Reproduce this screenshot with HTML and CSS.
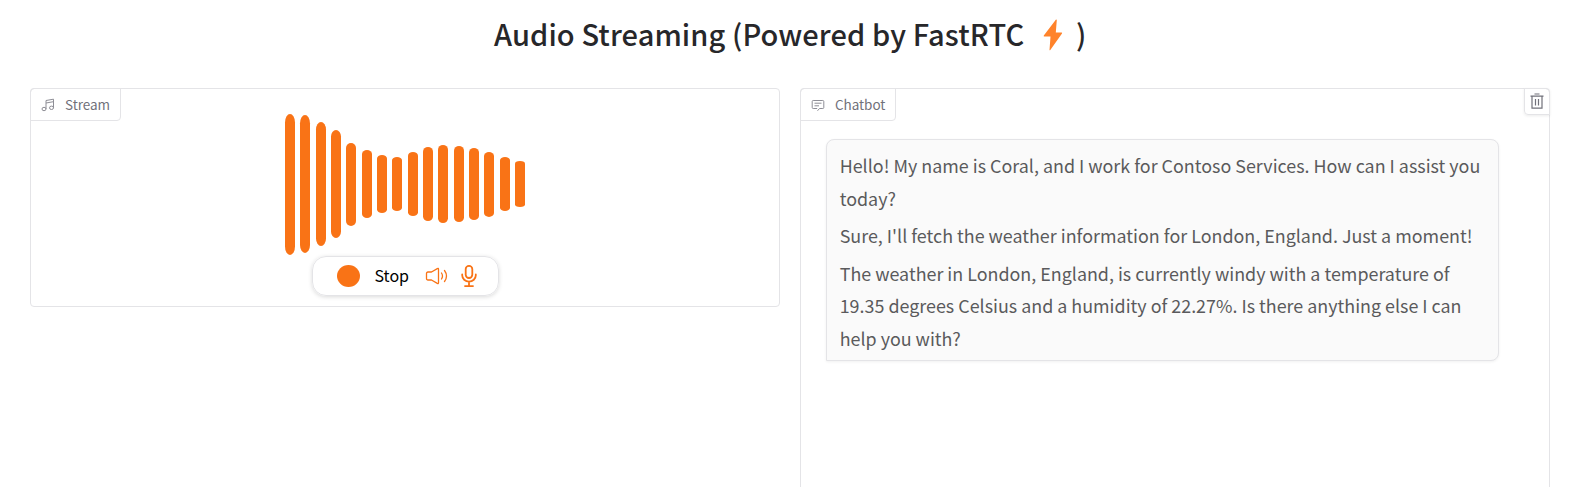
FILE: index.html
```html
<!DOCTYPE html>
<html lang="en">
<head>
<meta charset="utf-8">
<title>Audio Streaming</title>
<link rel="stylesheet" href="styles.css">
</head>
<body>
<h1 class="title"><span class="title-text">Audio Streaming (Powered by FastRTC</span><svg class="bolt" viewBox="0 0 20 32"><path d="M13 .5.800 16.500q-.6 1 .6 1H7.500L6.500 31q.3.400.8 0L19 14.500q.5-1-.5-1H12.800L13.800 1q-.2-.8-.8-.5z" fill="#ff832b"/></svg><span>)</span></h1>
<main class="columns">
  <section class="panel stream">
    <div class="label"><svg class="label-icon" viewBox="0 0 14 14" fill="none" stroke="#8e8e96" stroke-width="1"><ellipse cx="3" cy="11" rx="2" ry="1.700"/><ellipse cx="10.500" cy="9.800" rx="2" ry="1.700"/><path d="M5 11V2.500l7.500-1.300v8.600M5 5l7.500-1.300"/></svg><span class="label-text">Stream</span></div>
    <div class="wave">
      <i style="height:141px"></i><i style="height:138px"></i><i style="height:124px"></i><i style="height:108px"></i><i style="height:83px"></i><i style="height:68px"></i><i style="height:58px"></i><i style="height:54px"></i><i style="height:64px"></i><i style="height:74px"></i><i style="height:78px"></i><i style="height:76px"></i><i style="height:72px"></i><i style="height:65px"></i><i style="height:54px"></i><i style="height:46px"></i>
    </div>
    <div class="controls">
      <span class="dot"></span><span class="stop">Stop</span>
      <svg class="speaker" viewBox="0 0 24 20" fill="none" stroke="#f97316" stroke-width="1.300" stroke-linecap="round" stroke-linejoin="round"><path d="M13.500 3.200v13.600q0 1.200-1.200.6L6.500 14H3q-1.500 0-1.500-1.500v-5Q1.500 6 3 6h3.500l5.800-3.400q1.200-.6 1.200.6zM16.500 7q2 3 0 6M19.500 4.500q4 5.500 0 11"/></svg>
      <svg class="mic" viewBox="0 0 16 24" fill="none" stroke="#f97316" stroke-width="1.800" stroke-linecap="round"><rect x="4.700" y="1.800" width="6.600" height="12.200" rx="3.300"/><path d="M1.200 10.500v.8a6.800 6.300 0 0 0 13.600 0v-.8M8 18v4M4 22.100h8"/></svg>
    </div>
  </section>
  <section class="panel chat">
    <div class="label"><svg class="label-icon" viewBox="0 0 14 14" fill="none" stroke="#8e8e96" stroke-width="1"><path d="M6.500 12.800 8.500 10.500h3.300q1 0 1-1v-6q0-1-1-1H2.200q-1 0-1 1v6q0 1 1 1h4M3.500 5.200h7M3.500 7.800h4.500"/></svg><span class="label-text">Chatbot</span></div>
    <div class="trash"><svg viewBox="0 0 14 16" fill="none" stroke="#71717a" stroke-width="1.200"><path d="M4.500 1h5M.5 3.200h13M2 3.200v12h10v-12M5.500 6v6.500M8.500 6v6.500"/></svg></div>
    <div class="bubble">
      <p>Hello! My name is Coral, and I work for Contoso Services. How can I assist you<br>today?</p>
      <p>Sure, I'll fetch the weather information for London, England. Just a moment!</p>
      <p>The weather in London, England, is currently windy with a temperature of<br>19.35 degrees Celsius and a humidity of 22.27%. Is there anything else I can<br>help you with?</p>
    </div>
  </section>
</main>
</body>
</html>
```
FILE: styles.css
```css
* { box-sizing: border-box; }
body { margin: 0; height: 487px; overflow: hidden; background: #fff; font-family: "Noto Sans CJK SC", "Noto Sans", sans-serif; white-space: nowrap; }
svg { display: block; flex: none; }
.title { margin: 0; height: 88px; padding: 12px 0 0 494px; display: flex; align-items: flex-start; font-size: 29px; line-height: 42px; font-weight: 500; color: #27272a; }
.title-text { width: 532px; letter-spacing: .1px; }
.bolt { width: 20px; height: 32px; margin: 7px 13px 0 17px; }
.columns { display: grid; grid-template-columns: 750px 750px; gap: 20px; padding-left: 30px; align-items: start; }
.panel { position: relative; border: 1px solid #e4e4e7; border-radius: 4px; display: flex; flex-direction: column; }
.stream { height: 219px; }
.chat { height: 420px; }
.label { position: absolute; left: -1px; top: -1px; height: 33px; display: flex; align-items: center; padding: 0 10px; gap: 10px; border: 1px solid #e4e4e7; border-radius: 4px 0 4px 0; font-size: 13.500px; line-height: 20px; color: #71717a; width: 91px; }
.chat .label { width: 96px; }
.label-icon { width: 14px; height: 14px; }
.label-text { margin-top: -2px; letter-spacing: -.05px; }
.wave { height: 142px; margin: 24px 0 0 254px; width: 240px; display: flex; align-items: center; justify-content: space-between; }
.wave i { width: 10px; background: #f97316; border-radius: 5px / 6%; }
.controls { margin: 1px 0 0 281px; width: 187px; height: 40px; border: 1px solid #e4e4e7; border-radius: 14px; box-shadow: 0 1px 4px rgba(0,0,0,.15); display: flex; align-items: center; padding-left: 24px; }
.dot { width: 23px; height: 22px; border-radius: 50%; background: #f97316; }
.stop { width: 50px; margin: -2px 0 0 14.500px; font-size: 16px; line-height: 24px; color: #000; }
.speaker { width: 24px; height: 20px; }
.mic { width: 16px; height: 24px; margin-left: 12.500px; }
.trash { position: absolute; right: -1px; top: -1px; width: 26px; height: 27px; border: 1px solid #e4e4e7; border-radius: 0 4px 0 4px; box-shadow: 0 1px 3px rgba(0,0,0,.08); display: flex; justify-content: center; padding: 4px 1px 0 0; }
.trash svg { width: 14px; height: 16px; }
.bubble { margin: 50px 0 0 25px; width: 673px; height: 222px; padding: 9px 12.700px; border: 1px solid #e4e4e7; border-radius: 8px 8px 8px 0; background: #fafafa; box-shadow: 0 1px 3px rgba(0,0,0,.06); font-size: 17.900px; line-height: 32.600px; color: #5a5a5c; }
.bubble p { margin: 0 0 5px; }
```
